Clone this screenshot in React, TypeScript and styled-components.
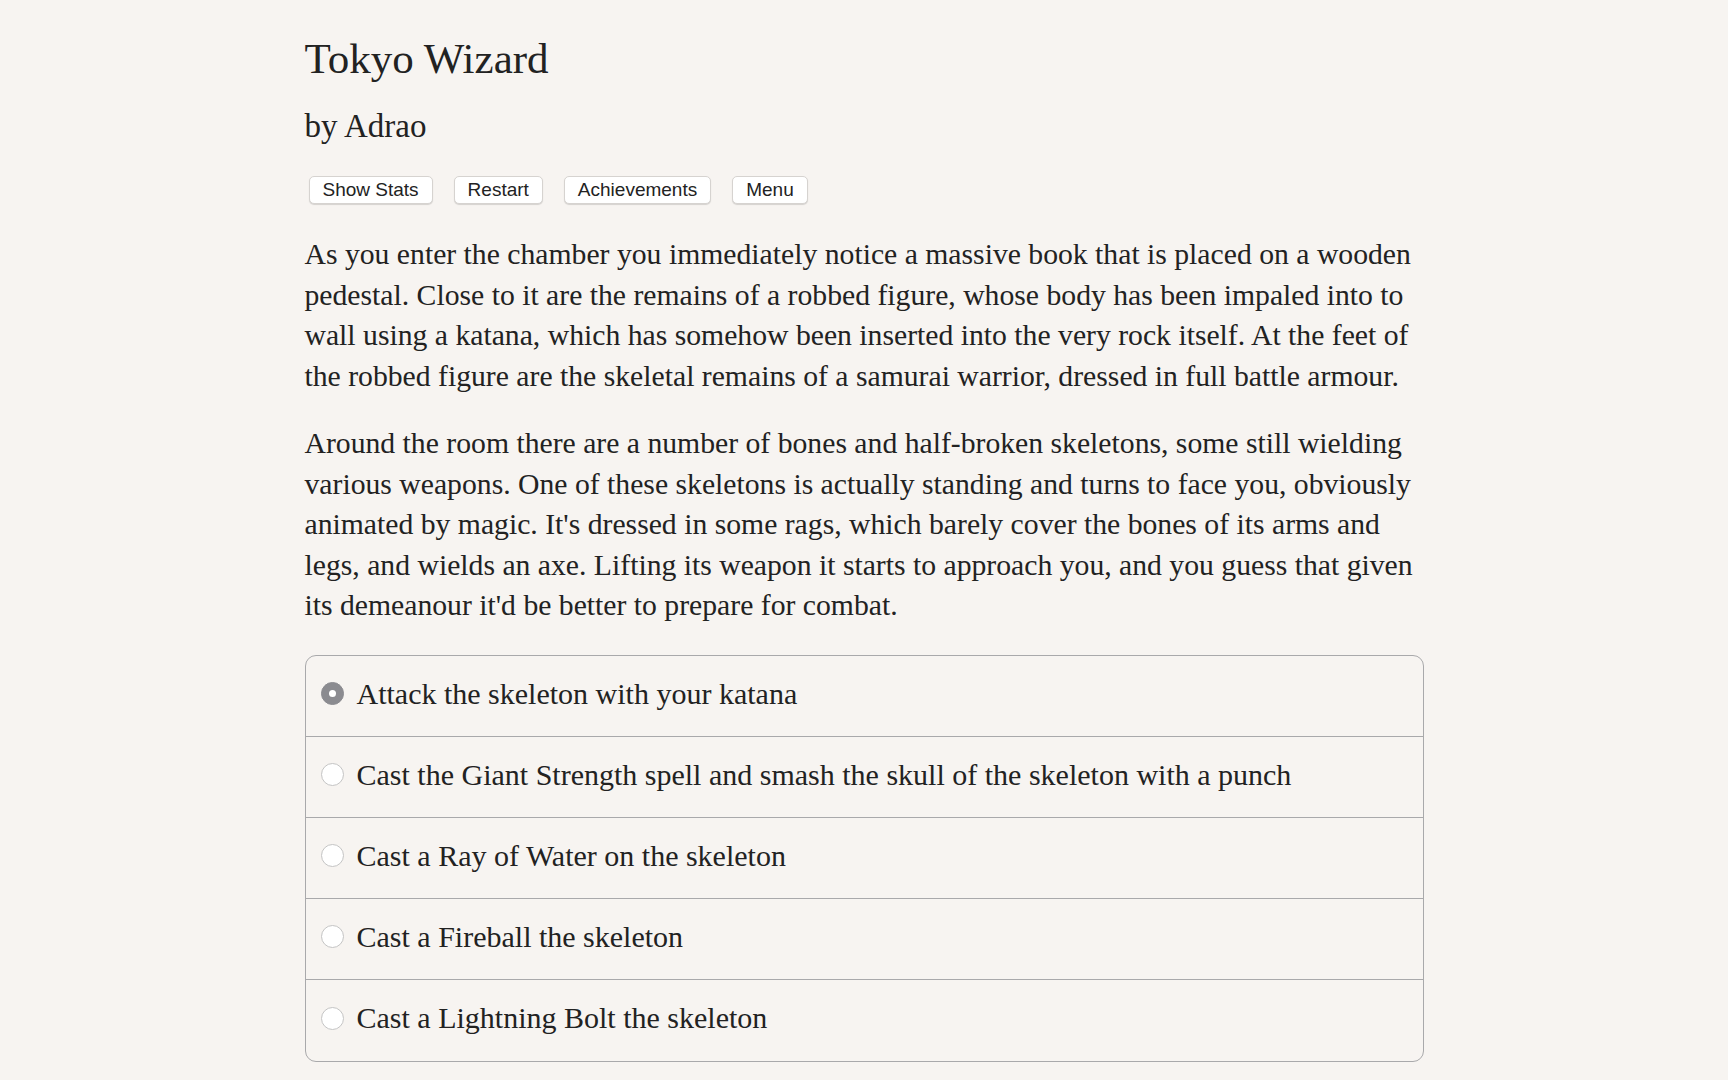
import React, { useState } from 'react';
import styled, { createGlobalStyle } from 'styled-components';

const GlobalStyle = createGlobalStyle`
  html, body {
    margin: 0;
    padding: 0;
    background: #f7f4f1;
  }
  body {
    font-family: "Liberation Serif", "Times New Roman", serif;
    color: #222;
  }
`;

const Page = styled.div`
  width: 1119px;
  margin: 0 auto;
  padding: 33px 0 20px;
`;

const Title = styled.h1`
  margin: 0;
  font-size: 43px;
  line-height: 52px;
  font-weight: normal;
`;

const Author = styled.h2`
  margin: 21px 0 0;
  font-size: 33px;
  line-height: 40px;
  font-weight: normal;
`;

const Toolbar = styled.div`
  display: flex;
  gap: 21px;
  margin: 30px 0 0 4px;
`;

const ToolButton = styled.button`
  height: 28px;
  padding: 0 13px;
  background: #fff;
  border: 1px solid #d6d3d0;
  border-radius: 5px;
  box-shadow: 0 1px 1px rgba(0, 0, 0, 0.14);
  font-family: "Liberation Sans", Arial, sans-serif;
  font-size: 19px;
  line-height: 26px;
  color: #222;
  cursor: pointer;
`;

const Story = styled.p`
  margin: 27px 0 0;
  font-size: 29.7px;
  line-height: 40.5px;

  &:first-of-type {
    margin-top: 30px;
  }
`;

const ChoiceList = styled.div`
  margin-top: 29px;
  border: 1.5px solid #a9a9ab;
  border-radius: 11px;
  overflow: hidden;
`;

const ChoiceRow = styled.label<{ $last: boolean }>`
  box-sizing: border-box;
  display: flex;
  align-items: center;
  gap: 13px;
  height: 81px;
  padding: 0 0 4px 15px;
  border-bottom: ${(p) => (p.$last ? 'none' : '1.5px solid #a9a9ab')};
  font-size: 30px;
  cursor: pointer;
`;

const Radio = styled.span<{ $checked: boolean }>`
  box-sizing: border-box;
  flex: none;
  width: 23px;
  height: 23px;
  border-radius: 50%;
  display: flex;
  align-items: center;
  justify-content: center;
  background: ${(p) => (p.$checked ? '#8b8b90' : '#fff')};
  border: 1px solid ${(p) => (p.$checked ? '#8b8b90' : '#c4c4c4')};

  &::after {
    content: '';
    width: 7px;
    height: 7px;
    border-radius: 50%;
    background: #fff;
    display: ${(p) => (p.$checked ? 'block' : 'none')};
  }
`;

const choices = [
  'Attack the skeleton with your katana',
  'Cast the Giant Strength spell and smash the skull of the skeleton with a punch',
  'Cast a Ray of Water on the skeleton',
  'Cast a Fireball the skeleton',
  'Cast a Lightning Bolt the skeleton',
];

export default function App() {
  const [selected, setSelected] = useState(0);

  return (
    <>
      <GlobalStyle />
      <Page>
        <Title>Tokyo Wizard</Title>
        <Author>by Adrao</Author>
        <Toolbar>
          <ToolButton>Show Stats</ToolButton>
          <ToolButton>Restart</ToolButton>
          <ToolButton>Achievements</ToolButton>
          <ToolButton>Menu</ToolButton>
        </Toolbar>
        <Story>
          As you enter the chamber you immediately notice a massive book that is placed on a wooden
          pedestal. Close to it are the remains of a robbed figure, whose body has been impaled into to
          wall using a katana, which has somehow been inserted into the very rock itself. At the feet of
          the robbed figure are the skeletal remains of a samurai warrior, dressed in full battle armour.
        </Story>
        <Story>
          Around the room there are a number of bones and half-broken skeletons, some still wielding
          various weapons. One of these skeletons is actually standing and turns to face you, obviously
          animated by magic. It's dressed in some rags, which barely cover the bones of its arms and
          legs, and wields an axe. Lifting its weapon it starts to approach you, and you guess that given
          its demeanour it'd be better to prepare for combat.
        </Story>
        <ChoiceList>
          {choices.map((c, i) => (
            <ChoiceRow key={c} $last={i === choices.length - 1} onClick={() => setSelected(i)}>
              <Radio $checked={selected === i} />
              {c}
            </ChoiceRow>
          ))}
        </ChoiceList>
      </Page>
    </>
  );
}
